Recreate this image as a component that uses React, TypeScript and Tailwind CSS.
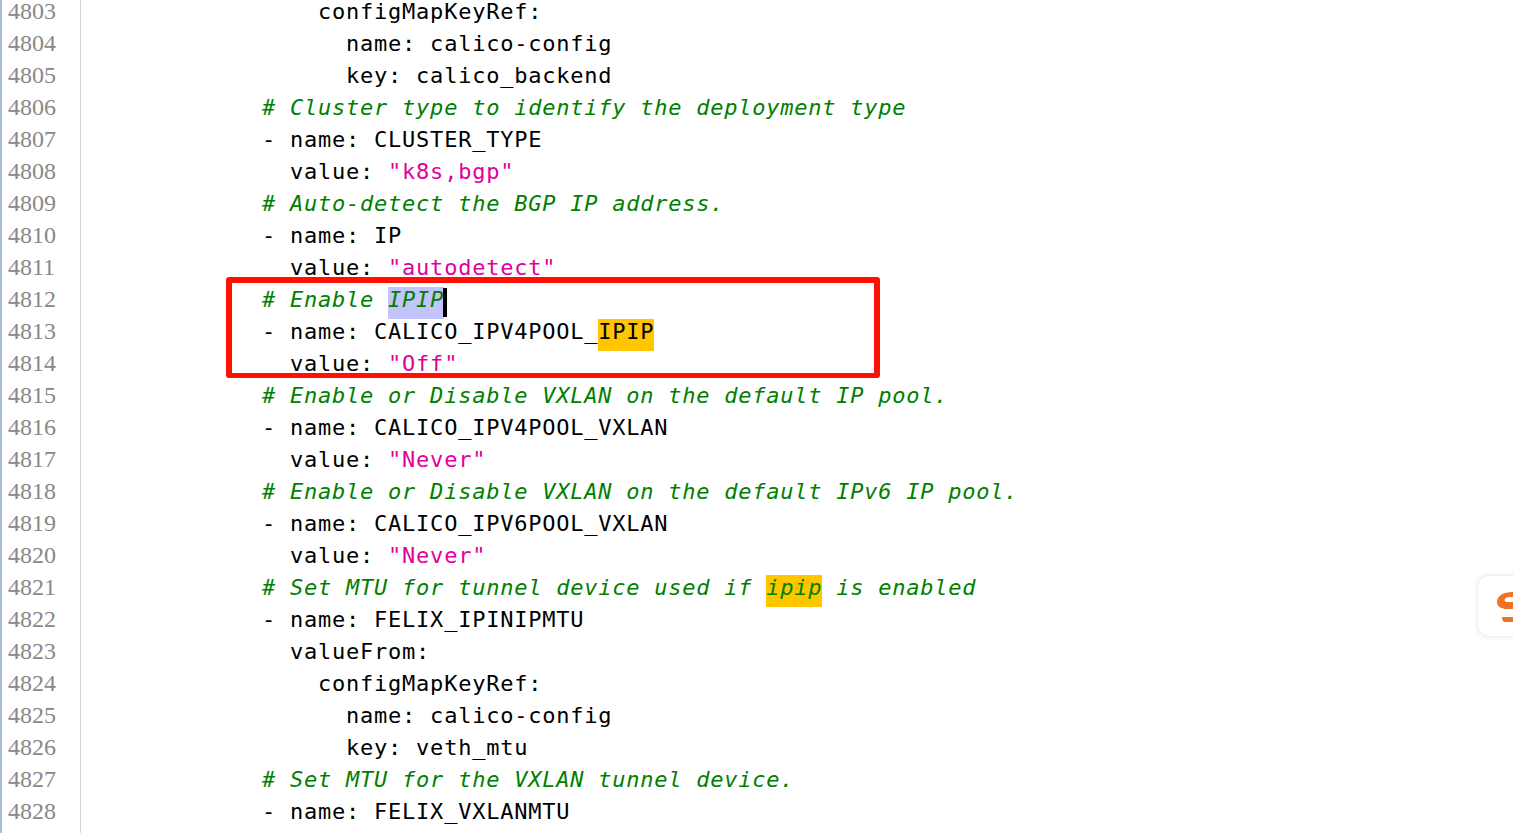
import React from "react";

type Seg = { t: string; k?: "c" | "s" | "sel" | "hl" | "hlc" };
const sp = (n: number) => " ".repeat(n);

const lines: Seg[][] = [
  [{ t: sp(16) + "configMapKeyRef:" }],
  [{ t: sp(18) + "name: calico-config" }],
  [{ t: sp(18) + "key: calico_backend" }],
  [{ t: sp(12) + "# Cluster type to identify the deployment type", k: "c" }],
  [{ t: sp(12) + "- name: CLUSTER_TYPE" }],
  [{ t: sp(14) + "value: " }, { t: '"k8s,bgp"', k: "s" }],
  [{ t: sp(12) + "# Auto-detect the BGP IP address.", k: "c" }],
  [{ t: sp(12) + "- name: IP" }],
  [{ t: sp(14) + "value: " }, { t: '"autodetect"', k: "s" }],
  [{ t: sp(12) + "# Enable ", k: "c" }, { t: "IPIP", k: "sel" }],
  [{ t: sp(12) + "- name: CALICO_IPV4POOL_" }, { t: "IPIP", k: "hl" }],
  [{ t: sp(14) + "value: " }, { t: '"Off"', k: "s" }],
  [{ t: sp(12) + "# Enable or Disable VXLAN on the default IP pool.", k: "c" }],
  [{ t: sp(12) + "- name: CALICO_IPV4POOL_VXLAN" }],
  [{ t: sp(14) + "value: " }, { t: '"Never"', k: "s" }],
  [{ t: sp(12) + "# Enable or Disable VXLAN on the default IPv6 IP pool.", k: "c" }],
  [{ t: sp(12) + "- name: CALICO_IPV6POOL_VXLAN" }],
  [{ t: sp(14) + "value: " }, { t: '"Never"', k: "s" }],
  [{ t: sp(12) + "# Set MTU for tunnel device used if ", k: "c" }, { t: "ipip", k: "hlc" }, { t: " is enabled", k: "c" }],
  [{ t: sp(12) + "- name: FELIX_IPINIPMTU" }],
  [{ t: sp(14) + "valueFrom:" }],
  [{ t: sp(16) + "configMapKeyRef:" }],
  [{ t: sp(18) + "name: calico-config" }],
  [{ t: sp(18) + "key: veth_mtu" }],
  [{ t: sp(12) + "# Set MTU for the VXLAN tunnel device.", k: "c" }],
  [{ t: sp(12) + "- name: FELIX_VXLANMTU" }],
];

function Part({ s }: { s: Seg }) {
  if (s.k === "c") return <span className="italic text-[#008000]">{s.t}</span>;
  if (s.k === "s") return <span className="text-[#e0009c]">{s.t}</span>;
  if (s.k === "sel")
    return (
      <span className="relative -mt-0.5 inline-block h-8 bg-[#c4c4fd] pt-0.5 italic text-[#008000]">
        {s.t}
        <span className="absolute right-[-3px] top-px h-[29px] w-1 bg-black" />
      </span>
    );
  if (s.k === "hl") return <span className="-mt-0.5 inline-block h-8 bg-[#ffc600] pt-0.5">{s.t}</span>;
  if (s.k === "hlc") return <span className="-mt-0.5 inline-block h-8 bg-[#ffc600] pt-0.5 italic text-[#008000]">{s.t}</span>;
  return <span>{s.t}</span>;
}

export default function App() {
  return (
    <div className="relative h-[833px] w-[1513px] overflow-hidden bg-white">
      <div className="-mt-px flex h-[834px]">
        <div className="w-[81px] shrink-0 border-r border-l-2 border-r-[#d8d8d8] border-l-[#a9bcd8] pl-1.5 font-['Liberation_Serif',serif] text-2xl text-[#888888]">
          {lines.map((_, i) => (
            <div key={i} className="h-8 pt-px leading-[22px]">
              {4803 + i}
            </div>
          ))}
        </div>
        <div className="pl-[13px] font-['DejaVu_Sans_Mono',monospace] text-[22px] tracking-[0.76px] text-black">
          {lines.map((l, i) => (
            <div key={i} className="h-8 whitespace-pre pt-0.5 leading-[22px]">
              {l.map((s, j) => (
                <Part key={j} s={s} />
              ))}
            </div>
          ))}
        </div>
      </div>
      <div className="absolute left-[226px] top-[277px] h-[101px] w-[654px] rounded-[3px] border-[6px] border-b-[5px] border-[#ff1000]" />
      <div className="absolute left-[1477px] top-[575px] flex h-[62px] w-[60px] items-center overflow-hidden rounded-xl border border-[#eeeeee] bg-white pl-[19px] shadow-[0_0_6px_rgba(0,0,0,0.08)]">
        <svg width="36" height="36" viewBox="0 0 36 36" className="shrink-0">
          <path d="M16 4C6 4 0 8 0 14C0 19 5 21 10 21L16 21L16 14L10 14C8 14 7 13 8 11C9 9 12 9 16 9Z" fill="#ee7424" />
          <path d="M5 29L16 29L16 34L8 34C6 34 5 32 5 29Z" fill="#ee7424" />
        </svg>
      </div>
    </div>
  );
}
